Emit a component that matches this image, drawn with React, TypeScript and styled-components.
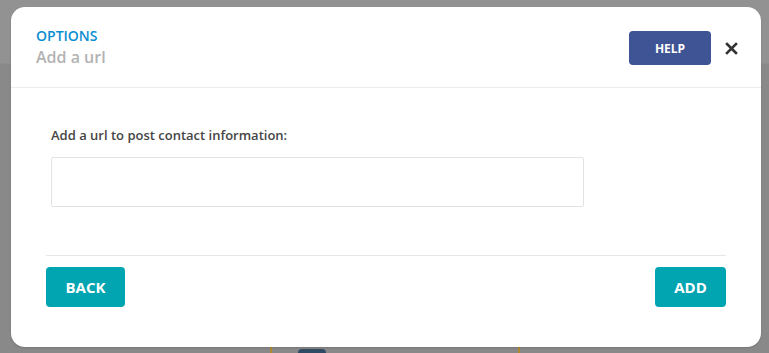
import styled, { createGlobalStyle } from 'styled-components'

const GlobalStyle = createGlobalStyle`
  html, body {
    margin: 0;
    padding: 0;
    height: 100%;
  }
  body {
    font-family: 'Open Sans', 'Liberation Sans', sans-serif;
    background: #8b8b8b;
    overflow: hidden;
  }
`

const Backdrop = styled.div`
  position: relative;
  width: 769px;
  height: 353px;
  overflow: hidden;
  background: linear-gradient(#929292 0 63px, #8e8e8e 63px 64px, #898989 64px 100%);
`

const PageRail = styled.div<{ $x: number }>`
  position: absolute;
  left: ${({ $x }) => $x}px;
  top: 340px;
  width: 2px;
  height: 13px;
  background: #b08a2e;
`

const PageDot = styled.div`
  position: absolute;
  left: 298px;
  top: 349px;
  width: 28px;
  height: 4px;
  border-radius: 14px 14px 0 0;
  background: #2f4a63;
`

const Modal = styled.div`
  position: absolute;
  top: 7px;
  left: 11px;
  width: 750px;
  height: 340px;
  display: flex;
  flex-direction: column;
  background: #fff;
  border-radius: 14px;
  box-shadow: 0 1px 2px rgba(0, 0, 0, 0.15);
  overflow: hidden;
`

const Header = styled.header`
  display: flex;
  align-items: flex-start;
  justify-content: space-between;
  height: 81px;
  box-sizing: border-box;
  padding: 19px 23px 0 25px;
  border-bottom: 1px solid #ececec;
`

const Titles = styled.div`
  display: flex;
  flex-direction: column;
`

const Eyebrow = styled.span`
  font-size: 14px;
  font-weight: 600;
  line-height: 20px;
  color: #0b8ed1;
`

const Title = styled.h2`
  margin: 0;
  font-size: 16px;
  font-weight: 600;
  line-height: 22px;
  color: #b3b3b3;
`

const HeaderActions = styled.div`
  display: flex;
  align-items: center;
  gap: 13px;
  margin-top: 5px;
`

const Button = styled.button<{ $tone: 'navy' | 'teal'; $w: number; $h: number; $size: number }>`
  width: ${({ $w }) => $w}px;
  height: ${({ $h }) => $h}px;
  border: 0;
  border-radius: 4px;
  background: ${({ $tone }) => ($tone === 'navy' ? '#3e5494' : '#01a5b1')};
  color: #fff;
  font-family: 'Open Sans', 'Liberation Sans', sans-serif;
  font-size: ${({ $size }) => $size}px;
  font-weight: 700;
  cursor: pointer;
`

const Close = styled.button`
  width: 14px;
  height: 14px;
  padding: 0;
  border: 0;
  background: none;
  display: flex;
  align-items: center;
  justify-content: center;
  cursor: pointer;
`

const Body = styled.div`
  flex: 1;
  display: flex;
  flex-direction: column;
  padding: 0 35px;
`

const Field = styled.div`
  display: flex;
  flex-direction: column;
  padding: 38px 0 48px 5px;
  border-bottom: 1px solid #e6e6e6;
`

const Label = styled.label`
  font-size: 13px;
  font-weight: 600;
  line-height: 18px;
  color: #454545;
  margin-bottom: 13px;
`

const Input = styled.input`
  width: 533px;
  height: 50px;
  box-sizing: border-box;
  border: 1px solid #e3e3e3;
  border-radius: 2px;
  outline: none;
  padding: 0 12px;
  font-family: 'Open Sans', 'Liberation Sans', sans-serif;
  font-size: 14px;
`

const Footer = styled.div`
  display: flex;
  justify-content: space-between;
  padding-top: 11px;
`

export default function App() {
  return (
    <>
      <GlobalStyle />
      <Backdrop>
        <PageRail $x={270} />
        <PageRail $x={518} />
        <PageDot />
        <Modal>
          <Header>
            <Titles>
              <Eyebrow>OPTIONS</Eyebrow>
              <Title>Add a url</Title>
            </Titles>
            <HeaderActions>
              <Button $tone="navy" $w={82} $h={34} $size={12}>
                HELP
              </Button>
              <Close aria-label="close">
                <svg width="13" height="13" viewBox="0 0 13 13">
                  <path d="M2 2L11 11M11 2L2 11" stroke="#333" strokeWidth="2.6" strokeLinecap="square" />
                </svg>
              </Close>
            </HeaderActions>
          </Header>
          <Body>
            <Field>
              <Label>Add a url to post contact information:</Label>
              <Input type="text" />
            </Field>
            <Footer>
              <Button $tone="teal" $w={79} $h={40} $size={15}>
                BACK
              </Button>
              <Button $tone="teal" $w={71} $h={40} $size={15}>
                ADD
              </Button>
            </Footer>
          </Body>
        </Modal>
      </Backdrop>
    </>
  )
}
